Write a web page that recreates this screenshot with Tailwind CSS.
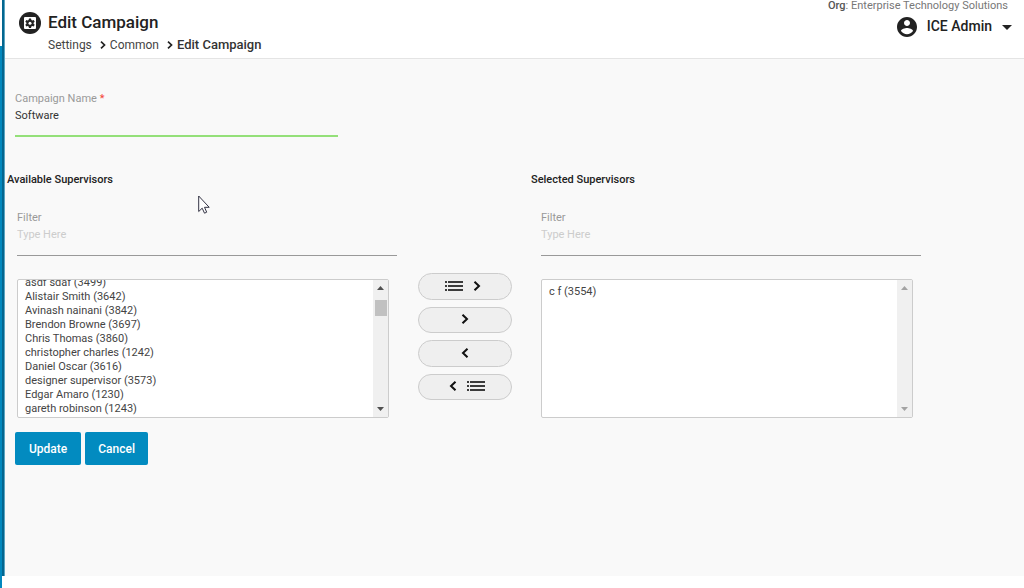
<!DOCTYPE html>
<html lang="en">
<head>
    <meta charset="UTF-8">
    <meta name="viewport" content="width=device-width, initial-scale=1.0">
    <title>Edit Campaign</title>
    <!-- Tailwind CSS (for styling) -->
    <script src="https://cdn.jsdelivr.net/npm/@tailwindcss/browser@4"></script>
</head>
<body class="bg-white text-[#444] text-xs font-[Roboto,sans-serif]">
    <div class="flex h-screen overflow-hidden">
        <!-- Collapsed sidebar edge -->
        <div class="w-[2px] shrink-0 bg-[#0288be] border-t-[46px] border-white"></div>
        <div class="w-[3px] shrink-0 mb-3 bg-[#04668f] border-r border-[#5aa5c2]"></div>

        <div class="flex-1 min-w-0 flex flex-col pb-3">
            <!-- Header -->
            <header class="flex justify-between h-[59px] shrink-0 border-b border-[#e4e4e4] bg-white">
                <div class="flex gap-[7px] pl-[14px] pt-3">
                    <svg class="w-[22px] h-[22px] shrink-0" viewBox="0 0 22 22">
                        <circle cx="11" cy="11" r="11" fill="#222"/>
                        <rect x="5" y="5" width="12" height="12" rx="1" fill="#fff"/>
                        <path fill="#222" d="M10 6.500h2l.4 1.400.9.500 1.400-.4 1 1.700-1.100 1v1.100l1.100 1-1 1.700-1.400-.4-.9.500-.4 1.400h-2l-.4-1.400-.9-.5-1.400.4-1-1.700 1.100-1v-1.100l-1.100-1 1-1.700 1.400.4.9-.5z"/>
                        <circle cx="11" cy="11.200" r="1.500" fill="#fff"/>
                    </svg>
                    <div>
                        <h1 class="text-[17px] leading-5 font-medium text-[#222]">Edit Campaign</h1>
                        <nav class="flex items-center mt-1 leading-[18px]" aria-label="Breadcrumb">
                            <a href="#">Settings</a>
                            <svg class="w-[6px] h-2 mx-2 mr-1" viewBox="0 0 6 8"><path d="M1 .7 4.500 4 1 7.300" fill="none" stroke="#222" stroke-width="1.700"/></svg>
                            <a href="#">Common</a>
                            <svg class="w-[6px] h-2 mx-2 mr-1" viewBox="0 0 6 8"><path d="M1 .7 4.500 4 1 7.300" fill="none" stroke="#222" stroke-width="1.700"/></svg>
                            <span class="text-[13px] font-medium text-[#333]">Edit Campaign</span>
                        </nav>
                    </div>
                </div>
                <div class="pr-3 flex flex-col items-end">
                    <p class="text-[11px] leading-3 pr-1 text-[#777]"><b class="font-medium text-[#555]">Org</b>: Enterprise Technology Solutions</p>
                    <button type="button" class="flex items-center mt-[3px] leading-5 text-sm font-medium text-[#222]">
                        <svg class="w-6 h-6 mr-2" viewBox="0 0 24 24" fill="#222"><path d="M12 2C6.480 2 2 6.480 2 12s4.480 10 10 10 10-4.480 10-10S17.520 2 12 2zm0 3c1.660 0 3 1.340 3 3s-1.340 3-3 3-3-1.340-3-3 1.340-3 3-3zm0 14.200c-2.500 0-4.710-1.280-6-3.220.03-1.990 4-3.080 6-3.080 1.990 0 5.970 1.090 6 3.080-1.290 1.940-3.500 3.220-6 3.220z"/></svg>
                        <span class="pb-[2px]">ICE Admin</span>
                        <svg class="w-[10px] h-[5px] ml-[10px]" viewBox="0 0 10 5"><path d="M0 0h10L5 5z" fill="#222"/></svg>
                    </button>
                </div>
            </header>

            <!-- Main Content -->
            <main class="flex-1 bg-[#f9f9f9] pt-[31px]">
                <form class="text-[11px]">
                    <div class="ml-[10px] w-[32%] pr-[3px]">
                        <label for="campaign-name" class="block leading-[18px] text-[#999]">Campaign Name <span class="text-[#f44336]">*</span></label>
                        <input type="text" id="campaign-name" value="Software" class="block w-full h-[29px] pb-[12px] border-b-2 border-[#94e079] text-[#333] outline-none">
                    </div>

                    <!-- Supervisor Picker -->
                    <div class="grid grid-cols-[390fr_134fr_390fr_103fr] pl-[2px] mt-[34px]">
                        <section>
                            <h2 class="leading-[18px] font-medium text-[#222]">Available Supervisors</h2>
                            <div class="pl-[10px] pt-5">
                                <label for="filter-available" class="block leading-[18px] text-[#999]">Filter</label>
                                <input type="text" id="filter-available" placeholder="Type Here" class="block w-full h-[29px] pb-[13px] border-b border-[#999] placeholder:text-[#ccc] outline-none">
                                <div class="flex w-[98%] h-[139px] mt-[23px] bg-white border border-[#ccc] rounded-[2px]">
                                    <select id="available" multiple size="10" aria-label="Available Supervisors" class="flex-1 min-w-0 h-full pl-[7px] outline-none [scrollbar-width:none] [&>option]:h-[14px] [&>option]:min-h-0">
                                        <option>asdf sdaf (3499)</option>
                                        <option>Alistair Smith (3642)</option>
                                        <option>Avinash nainani (3842)</option>
                                        <option>Brendon Browne (3697)</option>
                                        <option>Chris Thomas (3860)</option>
                                        <option>christopher charles (1242)</option>
                                        <option>Daniel Oscar (3616)</option>
                                        <option>designer supervisor (3573)</option>
                                        <option>Edgar Amaro (1230)</option>
                                        <option>gareth robinson (1243)</option>
                                        <option></option>
                                    </select>
                                    <div class="w-[15px] flex flex-col items-center py-[6px] bg-[#f0f0f0]">
                                        <svg class="w-[7px] h-1" viewBox="0 0 7 4"><path d="M0 4h7L3.500 0z" fill="#505050"/></svg>
                                        <div class="w-3 h-4 mt-[10px] bg-[#c1c1c1]"></div>
                                        <svg class="w-[7px] h-1 mt-auto" viewBox="0 0 7 4"><path d="M0 0h7L3.500 4z" fill="#505050"/></svg>
                                    </div>
                                </div>
                            </div>
                        </section>

                        <!-- Move Buttons -->
                        <div class="flex flex-col gap-[7px] pl-[21px] pr-[19px] pt-[102px]">
                            <button type="button" aria-label="Add all" class="flex items-center justify-center gap-[10px] h-[27px] pr-[5px] pb-[2px] rounded-full border border-[#ccc] bg-[#efefef]">
                                <svg class="w-[18px] h-[10px]" viewBox="0 0 18 10"><path d="M0 1h2M0 5h2M0 9h2M3 1h15M3 5h15M3 9h15" stroke="#000" stroke-width="1.600"/></svg>
                                <svg class="w-2 h-[10px]" viewBox="0 0 8 10"><path d="M1.500 .7 6 5 1.500 9.300" fill="none" stroke="#111" stroke-width="2"/></svg>
                            </button>
                            <button type="button" aria-label="Add" class="flex items-center justify-center h-[26px] pb-[2px] rounded-full border border-[#ccc] bg-[#efefef]">
                                <svg class="w-2 h-[10px]" viewBox="0 0 8 10"><path d="M1.500 .7 6 5 1.500 9.300" fill="none" stroke="#111" stroke-width="2"/></svg>
                            </button>
                            <button type="button" aria-label="Remove" class="flex items-center justify-center h-[27px] pb-[2px] rounded-full border border-[#ccc] bg-[#efefef]">
                                <svg class="w-2 h-[10px]" viewBox="0 0 8 10"><path d="M6.500 .7 2 5 6.500 9.300" fill="none" stroke="#111" stroke-width="2"/></svg>
                            </button>
                            <button type="button" aria-label="Remove all" class="flex items-center justify-center gap-[10px] h-[26px] pl-[3px] pb-[2px] rounded-full border border-[#ccc] bg-[#efefef]">
                                <svg class="w-2 h-[10px]" viewBox="0 0 8 10"><path d="M6.500 .7 2 5 6.500 9.300" fill="none" stroke="#111" stroke-width="2"/></svg>
                                <svg class="w-[18px] h-[10px]" viewBox="0 0 18 10"><path d="M0 1h2M0 5h2M0 9h2M3 1h15M3 5h15M3 9h15" stroke="#000" stroke-width="1.600"/></svg>
                            </button>
                        </div>

                        <section>
                            <h2 class="leading-[18px] font-medium text-[#222]">Selected Supervisors</h2>
                            <div class="pl-[10px] pt-5">
                                <label for="filter-selected" class="block leading-[18px] text-[#999]">Filter</label>
                                <input type="text" id="filter-selected" placeholder="Type Here" class="block w-full h-[29px] pb-[13px] border-b border-[#999] placeholder:text-[#ccc] outline-none">
                                <div class="flex w-[98%] h-[139px] mt-[23px] bg-white border border-[#ccc] rounded-[2px]">
                                    <select id="selected" multiple size="9" aria-label="Selected Supervisors" class="flex-1 min-w-0 h-full pl-[7px] pt-[5px] outline-none [scrollbar-width:none] [&>option]:h-[14px] [&>option]:min-h-0">
                                        <option>c f (3554)</option>
                                    </select>
                                    <div class="w-[15px] flex flex-col items-center justify-between py-[6px] bg-[#f0f0f0]">
                                        <svg class="w-[7px] h-1" viewBox="0 0 7 4"><path d="M0 4h7L3.500 0z" fill="#a3a3a3"/></svg>
                                        <svg class="w-[7px] h-1" viewBox="0 0 7 4"><path d="M0 0h7L3.500 4z" fill="#a3a3a3"/></svg>
                                    </div>
                                </div>
                            </div>
                        </section>
                    </div>

                    <!-- Form Actions -->
                    <div class="flex gap-1 ml-[10px] mt-[14px] text-xs">
                        <button type="submit" class="h-[33px] px-[14px] rounded-[2px] bg-[#028bc0] text-white font-medium">Update</button>
                        <button type="button" class="h-[33px] px-[13px] rounded-[2px] bg-[#028bc0] text-white font-medium">Cancel</button>
                    </div>
                </form>
            </main>
        </div>
    </div>

    <!-- Mouse pointer -->
    <svg class="absolute left-[198px] top-[195px] w-3 h-[19px]" viewBox="0 0 12 19"><path d="M.7 1v15.500l3.500-3.300 2.300 5 2.200-1-2.200-4.900h4.700z" fill="#fff" stroke="#334" stroke-width="1"/></svg>

    <script>
        // Start a little way down the list
        document.getElementById('available').scrollTop = 4;
    </script>
</body>
</html>
